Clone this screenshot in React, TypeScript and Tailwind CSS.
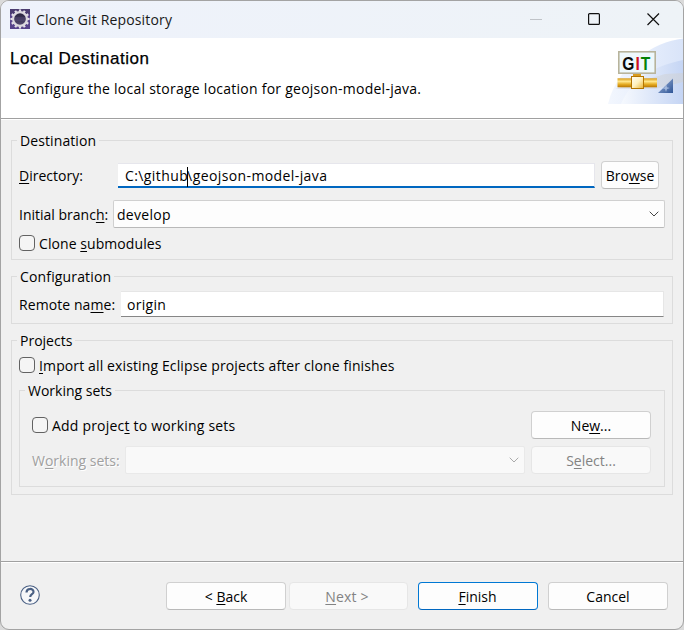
import type { ReactNode } from "react";

/* Text with one underlined mnemonic letter, marked by a preceding "&". */
function Label({ text, className = "" }: { text: string; className?: string }) {
  const i = text.indexOf("&");
  return (
    <span className={`whitespace-pre ${className}`}>
      {i < 0 ? (
        text
      ) : (
        <>
          {text.slice(0, i)}
          <span className="underline decoration-1 underline-offset-2 [text-decoration-skip-ink:none]">{text[i + 1]}</span>
          {text.slice(i + 2)}
        </>
      )}
    </span>
  );
}

function Group({ title, className, titleClass = "", children }: { title: string; className: string; titleClass?: string; children: ReactNode }) {
  return (
    <section className={`flex flex-col border border-[#dcdcdc] ${className}`}>
      <h2 className={`-mt-[10px] -mb-px ml-[5px] h-5 self-start bg-[#f0f0f0] px-[3px] leading-5 ${titleClass}`}>{title}</h2>
      {children}
    </section>
  );
}

function Check({ text, className = "", labelClass = "" }: { text: string; className?: string; labelClass?: string }) {
  return (
    <label className={`flex h-4 items-center gap-1 ${className}`}>
      <span className="size-4 shrink-0 rounded-[4px] border border-[#626262] bg-[#f5f5f5]" />
      <Label text={text} className={`pt-0.5 ${labelClass}`} />
    </label>
  );
}

function Button({ text, className = "", labelClass = "", kind = "normal" }: { text: string; className?: string; labelClass?: string; kind?: "normal" | "disabled" | "default" }) {
  const look = {
    normal: "border-[#d0d0d0] border-b-[#b9b9b9] bg-[#fdfdfd]",
    disabled: "border-[#e6e6e6] bg-[#f9f9f9] text-[#838383]",
    default: "border-[#0078d4] border-b-[#0067c0] bg-[#fdfdfd]",
  }[kind];
  return (
    <button className={`flex h-7 shrink-0 items-center justify-center rounded-[4px] border pt-px ${look} ${className}`}>
      <Label text={text} className={labelClass} />
    </button>
  );
}

function Chevron({ className }: { className: string }) {
  return (
    <svg viewBox="0 0 10 6" className={`h-1.5 w-2.5 ${className}`} fill="none" stroke="currentColor" strokeWidth="1">
      <path d="M.7 .7 5 5 9.3 .7" />
    </svg>
  );
}

function EclipseIcon() {
  const teeth = Array.from({ length: 12 }, (_, i) => i * 30);
  return (
    <svg viewBox="0 0 20 20" className="size-5">
      <defs>
        <linearGradient id="hole" x1="0" y1="0" x2="0" y2="1">
          <stop stopColor="#26213a" />
          <stop offset="1" stopColor="#554a72" />
        </linearGradient>
      </defs>
      <rect width="20" height="20" fill="#57428a" />
      <path d="M0 0h20v5H0z" fill="#4b3c70" />
      <g fill="#e4e0e8">
        {teeth.map((a) => (
          <rect key={a} x="8.900" y="0.400" width="2.200" height="3" transform={`rotate(${a} 10 10)`} />
        ))}
      </g>
      <circle cx="10" cy="10" r="6.900" fill="url(#hole)" stroke="#dcd8de" strokeWidth="2.200" />
      <path d="M5 9h10M5 11h10" stroke="#6d6290" strokeWidth=".5" />
    </svg>
  );
}

function GitBanner() {
  return (
    <svg viewBox="0 0 76 66" className="h-[66px] w-[76px]">
      <defs>
        <linearGradient id="sky" x1="0" y1="0" x2="1" y2="0">
          <stop stopColor="#f6f9fe" />
          <stop offset="1" stopColor="#c5d5f4" />
        </linearGradient>
        <linearGradient id="sky2" x1="0" y1="0" x2="1" y2="0">
          <stop stopColor="#f3f7fe" />
          <stop offset="1" stopColor="#d9e4f9" />
        </linearGradient>
        <linearGradient id="shade" x1="0" y1="0" x2="1" y2="0">
          <stop stopColor="#dce1e8" />
          <stop offset="1" stopColor="#cdd2dc" />
        </linearGradient>
        <linearGradient id="pipe" x1="0" y1="0" x2="0" y2="1">
          <stop stopColor="#d79a18" />
          <stop offset=".35" stopColor="#ffe68a" />
          <stop offset=".65" stopColor="#e7ae25" />
          <stop offset="1" stopColor="#b87600" />
        </linearGradient>
        <linearGradient id="box" x1="0" y1="0" x2="1" y2="1">
          <stop stopColor="#fffef5" />
          <stop offset=".5" stopColor="#fff1bf" />
          <stop offset="1" stopColor="#e9b434" />
        </linearGradient>
        <linearGradient id="corner" x1="0" y1="0" x2="1" y2="1">
          <stop stopColor="#9db4da" />
          <stop offset="1" stopColor="#2f5596" />
        </linearGradient>
      </defs>
      <path d="M76 .5C46 4 10 28 1 66h75z" fill="url(#sky2)" />
      <path d="M76 22C46 28 24 42 14 66h62z" fill="url(#sky)" />
      <path d="M8 51 58 36l18-1v9L48 51z" fill="url(#shade)" opacity=".75" />
      <g transform="translate(1 0)">
        <rect x="10.800" y="13.800" width="36.400" height="21.400" fill="#eef8fc" stroke="#b8b49c" strokeWidth="1.600" />
        <text transform="translate(14.200 31.500) scale(.82 1)" fontFamily="Liberation Sans, sans-serif" fontWeight="700" fontSize="19" letterSpacing="1.300" fill="#0a0a0a">
          G<tspan fill="#cf1020">I</tspan>
          <tspan fill="#048204">T</tspan>
        </text>
        <rect x="25" y="36" width="8" height="3" fill="#d99d1f" />
        <rect x="9.500" y="40.300" width="39.500" height="9" fill="url(#pipe)" />
        <rect x="23.500" y="38.500" width="12" height="12" fill="url(#box)" stroke="#b47500" />
        <path d="M65 40.500V55H50z" fill="url(#corner)" />
        <path d="m58 46 1 3.200 3 .8-3 1-1 3-1-3-3-1 3-.8z" fill="#c0d2ee" opacity=".7" />
      </g>
    </svg>
  );
}

export default function App() {
  return (
    <div className="h-[630px] w-[684px] bg-[#dadada] font-['Open_Sans','Noto_Sans',sans-serif] text-[14px] leading-5 text-black">
      <main className="flex h-[630px] w-[684px] flex-col overflow-hidden rounded-[9px] border border-[#a3a3a3] bg-[#f0f0f0]">
        <header className="flex h-[37px] shrink-0 items-center bg-linear-to-r from-[#eef2fb] to-[#eef3f7] pb-px pl-[9px]">
          <EclipseIcon />
          <span className="ml-1.5 grow pt-px tracking-[0.15px] text-[#191919]">Clone Git Repository</span>
          <svg viewBox="0 0 132 14" className="mr-[22px] h-3.5 w-[132px]" fill="none" stroke="#111" strokeWidth="1.200">
            <path d="M1 7.500h12" stroke="#bfc3c8" strokeWidth="1" />
            <rect x="59.600" y="1.600" width="10.800" height="10.800" rx="1" />
            <path d="m118.500 1.500 11.500 11.500M130 1.500 118.500 13" />
          </svg>
        </header>
        <div className="flex h-20 shrink-0 bg-white pl-[9px]">
          <div className="flex grow flex-col pt-[11px]">
            <h1 className="font-['Liberation_Sans',sans-serif] text-[17px] leading-5 tracking-[0.53px] [-webkit-text-stroke:0.25px_black]">Local Destination</h1>
            <p className="mt-2.5 pl-2 tracking-[0.25px]">Configure the local storage location for geojson-model-java.</p>
          </div>
          <GitBanner />
        </div>
        <div className="flex h-[444px] shrink-0 flex-col border-t border-b border-[#a0a0a0] px-2.5 shadow-[inset_0_1px_0_#fff,0_1px_0_#fff]">
          <Group title="Destination" titleClass="tracking-[0.1px]" className="mt-[21px] h-[120px]">
            <div className="mt-[11px] flex h-7 items-center pl-[7px]">
              <Label text="&Directory:" className="w-[99px] pt-0.5" />
              <div className="h-[25px] w-[477px] border-t border-r border-b-2 border-[#e6e6ec] border-b-[#0067c0] bg-white pl-[7px] leading-6 tracking-[0.4px]">
                C:\github<span className="-mx-px inline-block h-5 w-px bg-black align-middle" />\geojson-model-java
              </div>
              <Button text="Bro&wse" className="ml-1.5 w-[58px]" />
            </div>
            <div className="mt-[11px] flex h-7 items-center pl-[7px]">
              <Label text="Initial branc&h:" className="w-[94px] pt-0.5" />
              <div className="flex h-7 w-[552px] items-center justify-between rounded-[2px] border border-[#d0d0d0] border-b-[#b9b9b9] bg-[#fdfdfd] pr-[5px] pl-[3px]">
                <span className="pt-0.5 tracking-[0.3px]">develop</span>
                <Chevron className="text-[#444]" />
              </div>
            </div>
            <Check text="Clone &submodules" labelClass="tracking-[0.07px]" className="mt-[7px] ml-[7px]" />
          </Group>
          <Group title="Configuration" titleClass="tracking-[0.15px]" className="mt-4 h-12">
            <div className="mt-[5px] flex h-[26px] items-center pl-[7px]">
              <Label text="Remote na&me:" className="w-[102px] pt-0.5 tracking-[0.08px]" />
              <div className="h-[26px] w-[543px] border-t border-r border-b border-[#e6e6e6] border-b-[#868686] bg-white pl-1.5 leading-[26px] tracking-[0.3px]">origin</div>
            </div>
          </Group>
          <Group title="Projects" className="mt-4 h-[155px]">
            <Check text="&Import all existing Eclipse projects after clone finishes" labelClass="tracking-[0.125px]" className="mt-[7px] ml-[7px]" />
            <Group title="Working sets" className="mt-[17px] mr-[7px] ml-[7px] h-[97px]">
              <div className="mt-[11px] flex h-7 items-center justify-between pr-[13px] pl-3">
                <Check text="Add projec&t to working sets" labelClass="tracking-[0.2px]" />
                <Button text="Ne&w..." className="w-[120px]" />
              </div>
              <div className="mt-[7px] flex h-7 items-center pl-3">
                <Label text="W&orking sets:" className="w-[93px] pt-0.5 text-[#a0a0a0] [text-shadow:1px_1px_0_#fff]" />
                <div className="flex h-7 w-[400px] items-center justify-end rounded-[2px] border border-[#e9e9e9] bg-[#f9f9f9] pr-[5px]">
                  <Chevron className="text-[#aaa]" />
                </div>
                <Button text="S&elect..." kind="disabled" className="ml-1.5 w-[120px]" />
              </div>
            </Group>
          </Group>
        </div>
        <footer className="flex grow items-center pt-px pr-[15px] pl-[19px]">
          <svg viewBox="0 0 20 20" className="mr-auto mb-0.5 size-5">
            <circle cx="10" cy="10" r="9.300" fill="#f6f7f9" stroke="#4a6084" strokeWidth="1.100" />
            <path d="M6.500 7.500c0-4.600 7-4.600 7-.6 0 2.300-3.300 2.300-3.300 5" fill="none" stroke="#4a6084" strokeWidth="2.200" />
            <circle cx="10" cy="15.200" r="1.500" fill="#4a6084" />
          </svg>
          <Button text="< &Back" className="w-[120px]" />
          <Button text="&Next >" kind="disabled" labelClass="pr-[3px] tracking-[0.15px]" className="ml-[3px] w-[119px]" />
          <Button text="&Finish" kind="default" className="ml-2.5 w-[120px] pr-px" />
          <Button text="Cancel" className="ml-2.5 w-[120px]" />
        </footer>
      </main>
    </div>
  );
}
